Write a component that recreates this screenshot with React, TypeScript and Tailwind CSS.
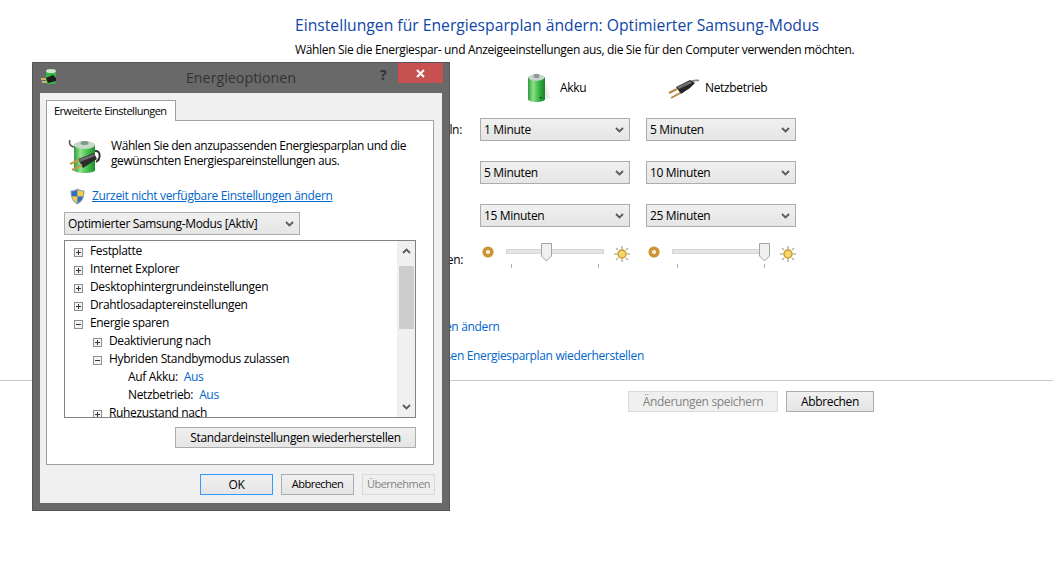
import React from 'react';

const font = { fontFamily: '"Open Sans", "Noto Sans", sans-serif' };

// --- icons ---
const Chevron = ({ up, className = '' }: { up?: boolean; className?: string }) => (
  <svg width="9" height="6" viewBox="0 0 9 6" className={className}>
    <path d={up ? 'M1 5 L4.5 1.5 L8 5' : 'M1 1 L4.5 4.5 L8 1'} fill="none" stroke="#5a5a5a" strokeWidth="1.8" />
  </svg>
);

const BigBattery = () => (
  <svg width="24" height="30" viewBox="0 0 24 30">
    <defs>
      <linearGradient id="akku" x1="0" x2="1" y1="0" y2="0">
        <stop offset="0" stopColor="#2f9c3a" />
        <stop offset="0.3" stopColor="#8fe08a" />
        <stop offset="0.65" stopColor="#35b53f" />
        <stop offset="1" stopColor="#1c7d2a" />
      </linearGradient>
    </defs>
    <path d="M17 27 L23 25 L19 9 Z" fill="#d8d8d8" opacity="0.5" />
    <path d="M1 5 C1 2 18 2 18 5 V26 C18 30 1 30 1 26 Z" fill="url(#akku)" />
    <ellipse cx="9.5" cy="4.5" rx="8" ry="3.2" fill="#c9d6cc" />
    <ellipse cx="9.5" cy="3" rx="3" ry="2.2" fill="#8f9c96" />
    <rect x="13" y="24" width="1.5" height="1.5" fill="#103010" />
  </svg>
);

const BigPlug = () => (
  <svg width="31" height="20" viewBox="0 0 31 20">
    <path d="M22 3 C25 1 27 1 31 1.5" fill="none" stroke="#8a8a8a" strokeWidth="1.8" />
    <path d="M8 8 L22 1 L27 4 L22 9 L13 15 Z" fill="#262626" />
    <path d="M9 8 L22 2 L24 4 L11 10 Z" fill="#707070" />
    <path d="M1 14 L9 10" stroke="#b58a3c" strokeWidth="2" />
    <path d="M3 19 L12 14" stroke="#b58a3c" strokeWidth="2" />
  </svg>
);

const PlanIcon = () => (
  <svg width="34" height="36" viewBox="0 0 34 36">
    <defs>
      <linearGradient id="plan" x1="0" x2="1" y1="0" y2="0">
        <stop offset="0" stopColor="#2f9c3a" />
        <stop offset="0.3" stopColor="#93e08c" />
        <stop offset="0.7" stopColor="#3cbb44" />
        <stop offset="1" stopColor="#1f8a2e" />
      </linearGradient>
    </defs>
    <path d="M6 9 C1 8 1 4 2 2" fill="none" stroke="#555" strokeWidth="1.5" />
    <path d="M27 13 C33 12 33 21 28 24" fill="none" stroke="#333" strokeWidth="2" />
    <path d="M6 7 C6 3 27 3 27 7 V32 C27 36 6 36 6 32 Z" fill="url(#plan)" />
    <ellipse cx="16.5" cy="7" rx="10.5" ry="4" fill="#c9d9c9" />
    <ellipse cx="16.5" cy="5" rx="4" ry="2" fill="#7f9a86" />
    <path d="M10 21 L26 15 L29 21 L15 30 Z" fill="#2c2c2c" />
    <path d="M11 21 L26 16 L27 18 L12 24 Z" fill="#6d6d6d" />
    <path d="M2 26 L11 22" stroke="#c29a4a" strokeWidth="2" />
    <path d="M4 32 L14 27" stroke="#c29a4a" strokeWidth="2" />
  </svg>
);

const TitleIcon = () => (
  <svg width="17" height="18" viewBox="0 0 17 18">
    <rect x="5" y="2" width="10" height="14" rx="2.5" fill="#35b544" />
    <ellipse cx="10" cy="3" rx="5" ry="2" fill="#cfe3cf" />
    <path d="M5 10 L12 7 L15 10 L15 13 L7 15 Z" fill="#1c1c1c" />
    <path d="M0 11 L5 11 M1 14 L6 14" stroke="#e8d070" strokeWidth="1.4" />
  </svg>
);

const Shield = () => (
  <svg width="15" height="17" viewBox="0 0 15 17">
    <path d="M7.5 0.5 C10 2 12 2.5 14.5 2.5 C14.5 9 13 13.5 7.5 16.5 C2 13.5 0.5 9 0.5 2.5 C3 2.5 5 2 7.5 0.5 Z" fill="#8e9db5" />
    <path d="M7.5 2 V8.5 H2 C1.8 7 1.7 5 1.7 3.6 C3.6 3.5 5.5 3 7.5 2 Z" fill="#2f6fc4" />
    <path d="M7.5 2 C9.5 3 11.4 3.5 13.3 3.6 C13.3 5 13.2 7 13 8.5 H7.5 Z" fill="#f3cf3f" />
    <path d="M2 8.5 H7.5 V15 C4 13 2.6 11 2 8.5 Z" fill="#f3cf3f" />
    <path d="M7.5 8.5 H13 C12.4 11 11 13 7.5 15 Z" fill="#2f6fc4" />
  </svg>
);

const Dim = () => (
  <svg width="12" height="12" viewBox="0 0 12 12">
    <circle cx="6" cy="6" r="3.8" fill="none" stroke="#cc9433" strokeWidth="3.6" />
    <circle cx="6" cy="6" r="1.2" fill="#f4e6c4" />
  </svg>
);

const Bright = () => (
  <svg width="16" height="16" viewBox="0 0 16 16">
    <g stroke="#b9b9a0" strokeWidth="1.6">
      <path d="M8 0 V3 M8 13 V16 M0 8 H3 M13 8 H16 M2 2 L4 4 M12 12 L14 14 M14 2 L12 4 M4 12 L2 14" />
    </g>
    <circle cx="8" cy="8" r="4" fill="#f3d86a" stroke="#c8952e" strokeWidth="1.4" />
  </svg>
);

const Thumb = () => (
  <svg width="11" height="19" viewBox="0 0 11 19">
    <path d="M0.5 0.5 H10.5 V13 L5.5 18 L0.5 13 Z" fill="#f0f0f0" stroke="#a3a3a3" />
  </svg>
);

const TreeBox = ({ open }: { open?: boolean }) => (
  <svg width="9" height="9" viewBox="0 0 9 9" className="shrink-0 mt-[2px]">
    <rect x="0.5" y="0.5" width="8" height="8" fill="#f4f4f4" stroke="#8e8f8f" />
    <path d={open ? 'M2 4.5 H7' : 'M2 4.5 H7 M4.5 2 V7'} stroke="#333" />
  </svg>
);

// --- small controls ---
const Combo = ({ label, width }: { label: string; width: string }) => (
  <div className={`${width} h-[23px] flex items-center justify-between pl-[3px] pr-[5px] border border-[#acacac] bg-gradient-to-b from-[#f0f0f0] to-[#e5e5e5] text-[12px] text-black`}>
    <span>{label}</span>
    <Chevron />
  </div>
);

const Slider = ({ at }: { at: string }) => (
  <div className="flex items-start h-[38px] pt-[8px]">
    <div className="w-[14px] ml-[2px] mr-[10px] pt-[1px]"><Dim /></div>
    <div className="relative w-[98px] h-[30px]">
      <div className="mt-[4px] h-[5px] bg-[#e4e4e4] border border-[#d6d6d6]" />
      <div className={`absolute top-[-2px] ${at}`}><Thumb /></div>
      <div className="absolute top-[19px] left-[5px] w-px h-[4px] bg-[#b0b0b0]" />
      <div className="absolute top-[19px] left-[92px] w-px h-[4px] bg-[#b0b0b0]" />
    </div>
    <div className="ml-[10px] mt-[1px]"><Bright /></div>
  </div>
);

const Btn = ({ label, width, kind, text = 'text-[12px]' }: { label: string; width: string; kind?: 'default' | 'disabled'; text?: string }) => (
  <div
    className={`${width} ${text} h-[21px] flex items-center justify-center border ${
      kind === 'default'
        ? 'border-[#3399ff] bg-gradient-to-b from-[#f0f0f0] to-[#e5e5e5] text-black'
        : kind === 'disabled'
        ? 'border-[#d9d9d9] bg-[#efefef] text-[#838383]'
        : 'border-[#acacac] bg-gradient-to-b from-[#f0f0f0] to-[#e5e5e5] text-black'
    }`}
  >
    {label}
  </div>
);

const rows = [
  { level: 0, label: 'Festplatte', box: 'plus' },
  { level: 0, label: 'Internet Explorer', box: 'plus' },
  { level: 0, label: 'Desktophintergrundeinstellungen', box: 'plus' },
  { level: 0, label: 'Drahtlosadaptereinstellungen', box: 'plus' },
  { level: 0, label: 'Energie sparen', box: 'minus' },
  { level: 1, label: 'Deaktivierung nach', box: 'plus' },
  { level: 1, label: 'Hybriden Standbymodus zulassen', box: 'minus' },
  { level: 2, label: 'Auf Akku:', value: 'Aus' },
  { level: 2, label: 'Netzbetrieb:', value: 'Aus' },
  { level: 1, label: 'Ruhezustand nach', box: 'plus' },
];

const TreeRow = ({ row }: { row: any }) => (
  <div className={`h-[18px] flex items-center text-[12px] text-black whitespace-nowrap ${row.level === 0 ? 'pl-[9px]' : row.level === 1 ? 'pl-[28px]' : 'pl-[63px]'}`}>
    {row.box && <TreeBox open={row.box === 'minus'} />}
    <span className={row.box ? 'ml-[7px]' : ''}>{row.label}</span>
    {row.value && <span className="ml-[6px] text-[#0066cc]">{row.value}</span>}
  </div>
);

const smallText = 'text-[11px] tracking-[-0.5px]';

const Dialog = () => (
  <div className="absolute left-[32px] top-[62px] w-[418px] h-[449px] bg-[#696969] border border-[#555555] flex flex-col">
    <div className="relative h-[30px] shrink-0 flex items-center justify-center">
      <div className="absolute left-[8px] top-[5px]"><TitleIcon /></div>
      <span className="text-[14.3px] tracking-normal text-[#333333]">Energieoptionen</span>
      <span className="absolute left-[347px] top-[1px] text-[14px] font-bold text-[#333333]">?</span>
      <div className="absolute left-[365px] top-0 w-[45px] h-[20px] bg-[#c75050] flex items-center justify-center">
        <svg width="9" height="9" viewBox="0 0 9 9"><path d="M1 1 L8 8 M8 1 L1 8" stroke="#ffffff" strokeWidth="2" /></svg>
      </div>
    </div>
    <div className="mx-[7px] mb-[7px] flex-1 bg-[#f0f0f0] px-[6px] pt-[7px]">
      <div className={`relative z-10 w-[130px] h-[21px] -mb-px flex items-center pl-[7px] bg-white border border-b-0 border-[#a0a0a0] text-black whitespace-nowrap ${smallText}`}>
        Erweiterte Einstellungen
      </div>
      <div className="w-[388px] h-[345px] bg-white border border-[#a0a0a0] pl-[17px]">
        <div className="flex pt-[18px] pl-[4px] h-[64px]">
          <div className="w-[43px] shrink-0 -mt-[1px]"><PlanIcon /></div>
          <p className="-mt-[1px] text-[12px] leading-[15px] tracking-[-0.42px] text-black whitespace-nowrap">
            Wählen Sie den anzupassenden Energiesparplan und die<br />gewünschten Energiespareinstellungen aus.
          </p>
        </div>
        <div className="flex items-center h-[18px] mt-[2px] pl-[6px]">
          <Shield />
          <span className="ml-[7px] text-[12px] text-[#0066cc] underline whitespace-nowrap">Zurzeit nicht verfügbare Einstellungen ändern</span>
        </div>
        <div className="mt-[7px]"><Combo label="Optimierter Samsung-Modus [Aktiv]" width="w-[236px]" /></div>
        <div className="relative mt-[5px] w-[352px] h-[178px] pt-[1px] border border-[#828282] bg-white overflow-hidden">
          {rows.map((r) => <TreeRow key={r.label} row={r} />)}
          <div className="absolute right-0 top-0 w-[18px] h-full bg-[#f0f0f0] flex flex-col items-center">
            <Chevron up className="mt-[7px]" />
            <div className="mt-[12px] w-[15px] h-[63px] bg-[#cdcdcd]" />
            <Chevron className="mt-auto mb-[7px]" />
          </div>
        </div>
        <div className="flex justify-end mt-[9px] w-[352px]">
          <Btn label="Standardeinstellungen wiederherstellen" width="w-[241px]" />
        </div>
      </div>
      <div className="flex justify-end gap-[8px] pt-[9px] w-[389px]">
        <Btn label="OK" width="w-[73px]" kind="default" />
        <Btn label="Abbrechen" width="w-[73px]" text={smallText} />
        <Btn label="Übernehmen" width="w-[73px]" kind="disabled" text={smallText} />
      </div>
    </div>
  </div>
);

export default function App() {
  return (
    <div className="relative w-[1053px] h-[568px] bg-white overflow-hidden text-black tracking-[-0.34px]" style={font}>
      <div className="h-[380px] pl-[295px] pt-[14px]">
        <h1 className="text-[15.7px] leading-[22px] tracking-normal text-[#0f46a8]">Einstellungen für Energiesparplan ändern: Optimierter Samsung-Modus</h1>
        <p className="mt-[6px] text-[12px] leading-[16px]">Wählen Sie die Energiespar- und Anzeigeeinstellungen aus, die Sie für den Computer verwenden möchten.</p>

        <div className="grid grid-cols-[169px_150px_150px] gap-x-[16px] mt-[12px] h-[48px] text-[12px]">
          <div />
          <div className="flex items-start pl-[47px]"><div className="mt-[3px]"><BigBattery /></div><span className="ml-[9px] mt-[9px]">Akku</span></div>
          <div className="flex items-start pl-[22px]"><div className="mt-[9px]"><BigPlug /></div><span className="ml-[6px] mt-[9px]">Netzbetrieb</span></div>
        </div>

        <div className="grid grid-cols-[169px_150px_150px] gap-x-[16px] gap-y-[20px] items-center text-[12px]">
          <span className="pl-[46px] whitespace-nowrap">Bildschirm verdunkeln:</span>
          <Combo label="1 Minute" width="w-[150px]" />
          <Combo label="5 Minuten" width="w-[150px]" />
          <span className="pl-[46px] whitespace-nowrap">Bildschirm aus:</span>
          <Combo label="5 Minuten" width="w-[150px]" />
          <Combo label="10 Minuten" width="w-[150px]" />
          <span className="pl-[46px] whitespace-nowrap">Energiesparmodus:</span>
          <Combo label="15 Minuten" width="w-[150px]" />
          <Combo label="25 Minuten" width="w-[150px]" />
        </div>

        <div className="grid grid-cols-[169px_150px_150px] gap-x-[16px] mt-[10px] text-[12px]">
          <span className="pl-[42px] pt-[14px] whitespace-nowrap">Planhelligkeit anpassen:</span>
          <Slider at="left-[35px]" />
          <Slider at="left-[87px]" />
        </div>

        <div className="-ml-[6px] mt-[44px] text-[12px] text-[#0066cc] whitespace-nowrap">
          <div className="leading-[16px] pl-[2px]">Erweiterte Energieeinstellungen ändern</div>
          <div className="mt-[13px] leading-[16px]">Standardeinstellungen für diesen Energiesparplan wiederherstellen</div>
        </div>
      </div>
      <div className="border-t border-[#c8c8c8] flex pl-[628px] gap-[8px] pt-[10px]">
        <Btn label="Änderungen speichern" width="w-[150px]" kind="disabled" />
        <Btn label="Abbrechen" width="w-[88px]" />
      </div>
      <Dialog />
    </div>
  );
}
